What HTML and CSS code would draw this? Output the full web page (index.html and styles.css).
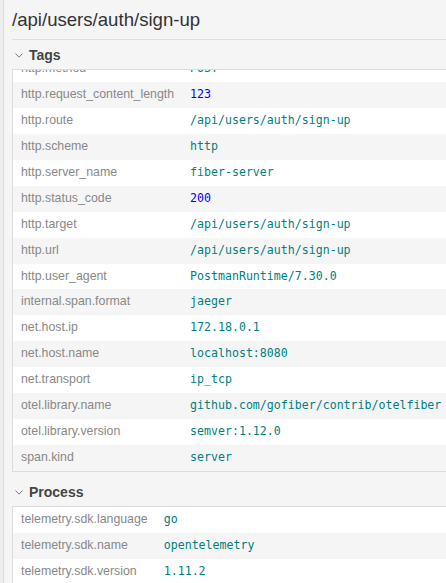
FILE: index.html
```html
<!DOCTYPE html>
<html lang="en">
<head>
<meta charset="utf-8">
<title>Span detail</title>
<link rel="stylesheet" href="styles.css">
</head>
<body>
<div class="frame">
  <div class="gutter"></div>
  <div class="detail">
    <h2 class="title">/api/users/auth/sign-up</h2>

    <section class="acc">
      <div class="acc-header">
        <svg class="chev" viewBox="0 0 8 5" width="8" height="5"><path d="M0.5 0.5 L4 4.2 L7.5 0.5" fill="none" stroke="#777" stroke-width="1"/></svg>
        <strong class="acc-label">Tags</strong>
      </div>
      <div class="kv kv-scroll">
        <table class="kv-table kv-offset">
          <tbody>
            <tr><td class="k">http.method</td><td class="v">POST</td></tr>
            <tr><td class="k">http.request_content_length</td><td class="v num">123</td></tr>
            <tr><td class="k">http.route</td><td class="v">/api/users/auth/sign-up</td></tr>
            <tr><td class="k">http.scheme</td><td class="v">http</td></tr>
            <tr><td class="k">http.server_name</td><td class="v">fiber-server</td></tr>
            <tr><td class="k">http.status_code</td><td class="v num">200</td></tr>
            <tr><td class="k">http.target</td><td class="v">/api/users/auth/sign-up</td></tr>
            <tr><td class="k">http.url</td><td class="v">/api/users/auth/sign-up</td></tr>
            <tr><td class="k">http.user_agent</td><td class="v">PostmanRuntime/7.30.0</td></tr>
            <tr><td class="k">internal.span.format</td><td class="v">jaeger</td></tr>
            <tr><td class="k">net.host.ip</td><td class="v">172.18.0.1</td></tr>
            <tr><td class="k">net.host.name</td><td class="v">localhost:8080</td></tr>
            <tr><td class="k">net.transport</td><td class="v">ip_tcp</td></tr>
            <tr><td class="k">otel.library.name</td><td class="v">github.com/gofiber/contrib/otelfiber</td></tr>
            <tr><td class="k">otel.library.version</td><td class="v">semver:1.12.0</td></tr>
            <tr><td class="k">span.kind</td><td class="v">server</td></tr>
          </tbody>
        </table>
      </div>
    </section>

    <section class="acc">
      <div class="acc-header">
        <svg class="chev" viewBox="0 0 8 5" width="8" height="5"><path d="M0.5 0.5 L4 4.2 L7.5 0.5" fill="none" stroke="#777" stroke-width="1"/></svg>
        <strong class="acc-label">Process</strong>
      </div>
      <div class="kv">
        <table class="kv-table">
          <tbody>
            <tr><td class="k">telemetry.sdk.language</td><td class="v">go</td></tr>
            <tr><td class="k">telemetry.sdk.name</td><td class="v">opentelemetry</td></tr>
            <tr><td class="k">telemetry.sdk.version</td><td class="v">1.11.2</td></tr>
          </tbody>
        </table>
      </div>
    </section>
  </div>
</div>
</body>
</html>
```

FILE: styles.css
```css
html, body {
  margin: 0;
  padding: 0;
}

body {
  background: #f5f5f5;
  font-family: "Liberation Sans", Arial, sans-serif;
  width: 446px;
  height: 583px;
  overflow: hidden;
}

.frame {
  display: flex;
  width: 500px;
  min-height: 583px;
}

.gutter {
  flex: none;
  width: 3px;
  background: #eeeeee;
  border-right: 1px solid #dcdcdc;
}

.detail {
  flex: 1;
  padding-left: 8px;
}

.title {
  margin: 0;
  padding: 8px 0 7px;
  font-size: 18.6px;
  font-weight: 400;
  line-height: 24px;
  color: #333;
  border-bottom: 1px solid #dedede;
}

.acc-header {
  display: flex;
  align-items: center;
  height: 29px;
  padding-left: 3px;
  color: #454545;
}

.chev {
  flex: none;
  margin-right: 6px;
  margin-top: 1px;
}

.acc-label {
  font-size: 14px;
  font-weight: 700;
  line-height: 16px;
  padding-top: 1px;
}

.kv {
  background: #fff;
  border: 1px solid #dcdcdc;
}

.kv-scroll {
  height: 401px;
  overflow: hidden;
  margin-bottom: 5px;
}

.kv-table {
  width: 100%;
  border-collapse: collapse;
}

.kv-offset {
  margin-top: -14px;
}

.kv-table td {
  padding: 4px 8px;
  line-height: 17.93px;
  vertical-align: middle;
  white-space: nowrap;
}

.kv-table tr:nth-child(2n) td {
  background: #f5f5f5;
}

.k {
  width: 1px;
  color: #888;
  font-size: 12.35px;
}

.v {
  font-family: "DejaVu Sans Mono", "Liberation Mono", monospace;
  font-size: 11.6px;
  color: teal;
}

.v.num {
  color: blue;
}
```
